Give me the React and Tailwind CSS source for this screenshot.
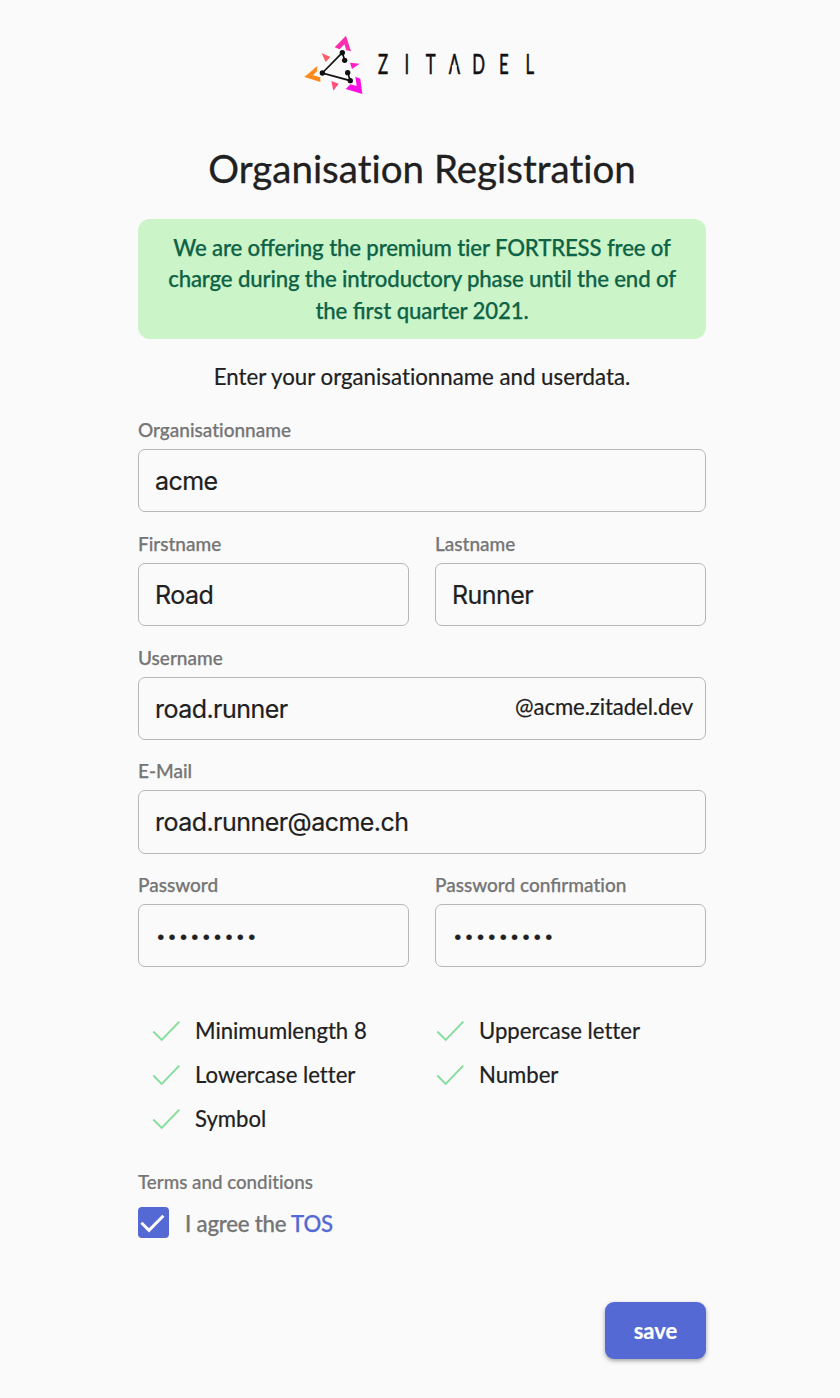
import React from "react";

const Logo = () => (
  <svg viewBox="0 0 240 70" className="h-[70px] w-[240px]" aria-label="Zitadel">
    <g transform="translate(-5 -5) scale(0.33333)">
      <path fill="#fe2fae" d="M153 32 168 79 154 76 148 58 134 73 119 67Z" />
      <path fill="#ff8a1c" d="M67 123 28 156 76 171 76 157 54 151 66 139Z" />
      <path fill="#fe10e0" d="M202 207 196 161 181 155 185 183 166 178 152 192Z" />
      <path fill="#fe5c66" d="M80 84 106 96 92 111Z" />
      <path fill="#fe1ecb" d="M165 113 194 116 171 132Z" />
      <path fill="#fe4f7c" d="M109 168 131 176 115 197Z" />
      <path fill="none" stroke="#111" strokeWidth="5" d="M149 106 142 83 82 144 166 167 158 143" />
      <g fill="#111">
        <circle cx="142" cy="83" r="8" />
        <circle cx="149" cy="106" r="8" />
        <circle cx="82" cy="144" r="8" />
        <circle cx="166" cy="167" r="8" />
        <circle cx="158" cy="143" r="8" />
      </g>
    </g>
    <g transform="translate(0 44.3) scale(0.62 1)">
      <text
        x="133.9 172.2 211 249 288 328.6 370.5"
        y="0"
        textAnchor="middle"
        fill="#111"
        stroke="#111"
        strokeWidth="0.6"
        className="font-['Lato'] text-[27px]"
      >
        ZITADEL
      </text>
      <path d="M245 -9h8v5h-8z" fill="#fafafa" />
    </g>
  </svg>
);

const Lig = ({ children }) => (
  <span className="tracking-normal [font-variant-ligatures:normal]">{children}</span>
);

const Field = ({ label, value, type = "text", suffix }) => (
  <label className="block">
    <span className="mb-[7px] block h-6 text-[19px] leading-6 font-medium text-[#757575] [-webkit-text-stroke:0.25px]">
      {label}
    </span>
    <span className="flex h-[63.25px] items-center rounded-[7px] border border-[#b7b7b7] px-4">
      <input
        type={type}
        defaultValue={value}
        className={
          type === "password"
            ? "w-full min-w-0 bg-transparent pt-[2px] pl-px font-['Inter',sans-serif] text-[17px] tracking-[1.8px] text-[#202021] outline-none [-webkit-text-stroke:0.2px]"
            : "w-full min-w-0 bg-transparent pt-[2.5px] font-['Inter',sans-serif] text-[25px] tracking-[-0.54px] text-[#202021] outline-none"
        }
      />
      {suffix && <span className="-mr-1 pb-[2px] text-[22.2px] tracking-[-0.1px]">{suffix}</span>}
    </span>
  </label>
);

const Rule = ({ children }) => (
  <li className="flex h-11 items-center gap-[15px] pl-[14px]">
    <svg viewBox="0 0 28 22" className="h-[22px] w-7 shrink-0">
      <path d="M1.3 11.5 9.7 19.9 27.3 1.6" fill="none" stroke="#85dd9b" strokeWidth="1.9" />
    </svg>
    <span>{children}</span>
  </li>
);

export default function App() {
  return (
    <main className="flex h-[1398px] w-[840px] flex-col bg-[#fafafa] pr-[134px] pl-[138px] font-['Lato',sans-serif] text-[22.15px] text-[#202021] [-webkit-text-stroke:0.2px] [font-variant-ligatures:none]">
      <header className="flex h-[70px] shrink-0 justify-center pt-[30px] pr-[4px]">
        <Logo />
      </header>
      <h1 className="mt-[72px] text-center text-[38.5px] leading-[52px] whitespace-nowrap [-webkit-text-stroke:0.3px]">
        Organisation Registration
      </h1>
      <p className="mt-[25px] h-[120px] shrink-0 rounded-xl bg-[#cbf4c9] pt-[12.5px] text-center text-[22.2px] leading-[31.5px] font-medium tracking-[-0.15px] whitespace-nowrap text-[#0e6245] [-webkit-text-stroke:0.25px]">
        We are <Lig>offering</Lig> the premium tier FORTRESS free of
        <br />
        charge during the introductory phase until the end of
        <br />
        the <Lig>first</Lig> quarter 2021.
      </p>
      <p className="mt-[22px] h-8 text-center text-[22.25px] leading-8">Enter your organisationname and userdata.</p>
      <form className="mt-[25px] flex flex-col">
        <div className="flex flex-col gap-[19.5px]">
          <Field label="Organisationname" value="acme" />
          <div className="grid grid-cols-2 gap-[26px]">
            <Field label="Firstname" value="Road" />
            <Field label="Lastname" value="Runner" />
          </div>
          <Field label="Username" value="road.runner" suffix="@acme.zitadel.dev" />
          <Field label="E-Mail" value="road.runner@acme.ch" />
          <div className="grid grid-cols-2 gap-[26px]">
            <Field label="Password" value="roadroads" type="password" />
            <Field
              label={
                <>
                  Password con<Lig>fi</Lig>rmation
                </>
              }
              value="roadroads"
              type="password"
            />
          </div>
        </div>
        <ul className="mt-[41.75px] grid grid-cols-2">
          <Rule>Minimumlength 8</Rule>
          <Rule>Uppercase letter</Rule>
          <Rule>Lowercase letter</Rule>
          <Rule>Number</Rule>
          <Rule>Symbol</Rule>
        </ul>
        <p className="mt-[29px] h-6 text-[18.75px] leading-6 font-medium text-[#757575] [-webkit-text-stroke:0.2px]">
          Terms and conditions
        </p>
        <div className="mt-[13px] flex h-[31px] items-center text-[#757575]">
          <span className="mr-4 flex h-[31px] w-[31px] rounded-[4px] bg-[#5469d4]">
            <svg viewBox="0 0 31 31" className="h-[31px] w-[31px]">
              <path d="M3.4 15.8 11 23.4 25.4 8.8" fill="none" stroke="#fff" strokeWidth="3" />
            </svg>
          </span>
          <span className="pt-[2px] text-[22.2px] font-medium tracking-[-0.2px] [-webkit-text-stroke:0.25px]">
            I agree the <a className="text-[#5469d4]">TOS</a>
          </span>
        </div>
        <button
          type="button"
          className="mt-16 h-[57px] w-[101px] self-end rounded-[9px] bg-[#5469d4] text-[22px] font-bold text-white shadow-[0_2px_4px_rgba(0,0,0,0.35)]"
        >
          save
        </button>
      </form>
    </main>
  );
}
